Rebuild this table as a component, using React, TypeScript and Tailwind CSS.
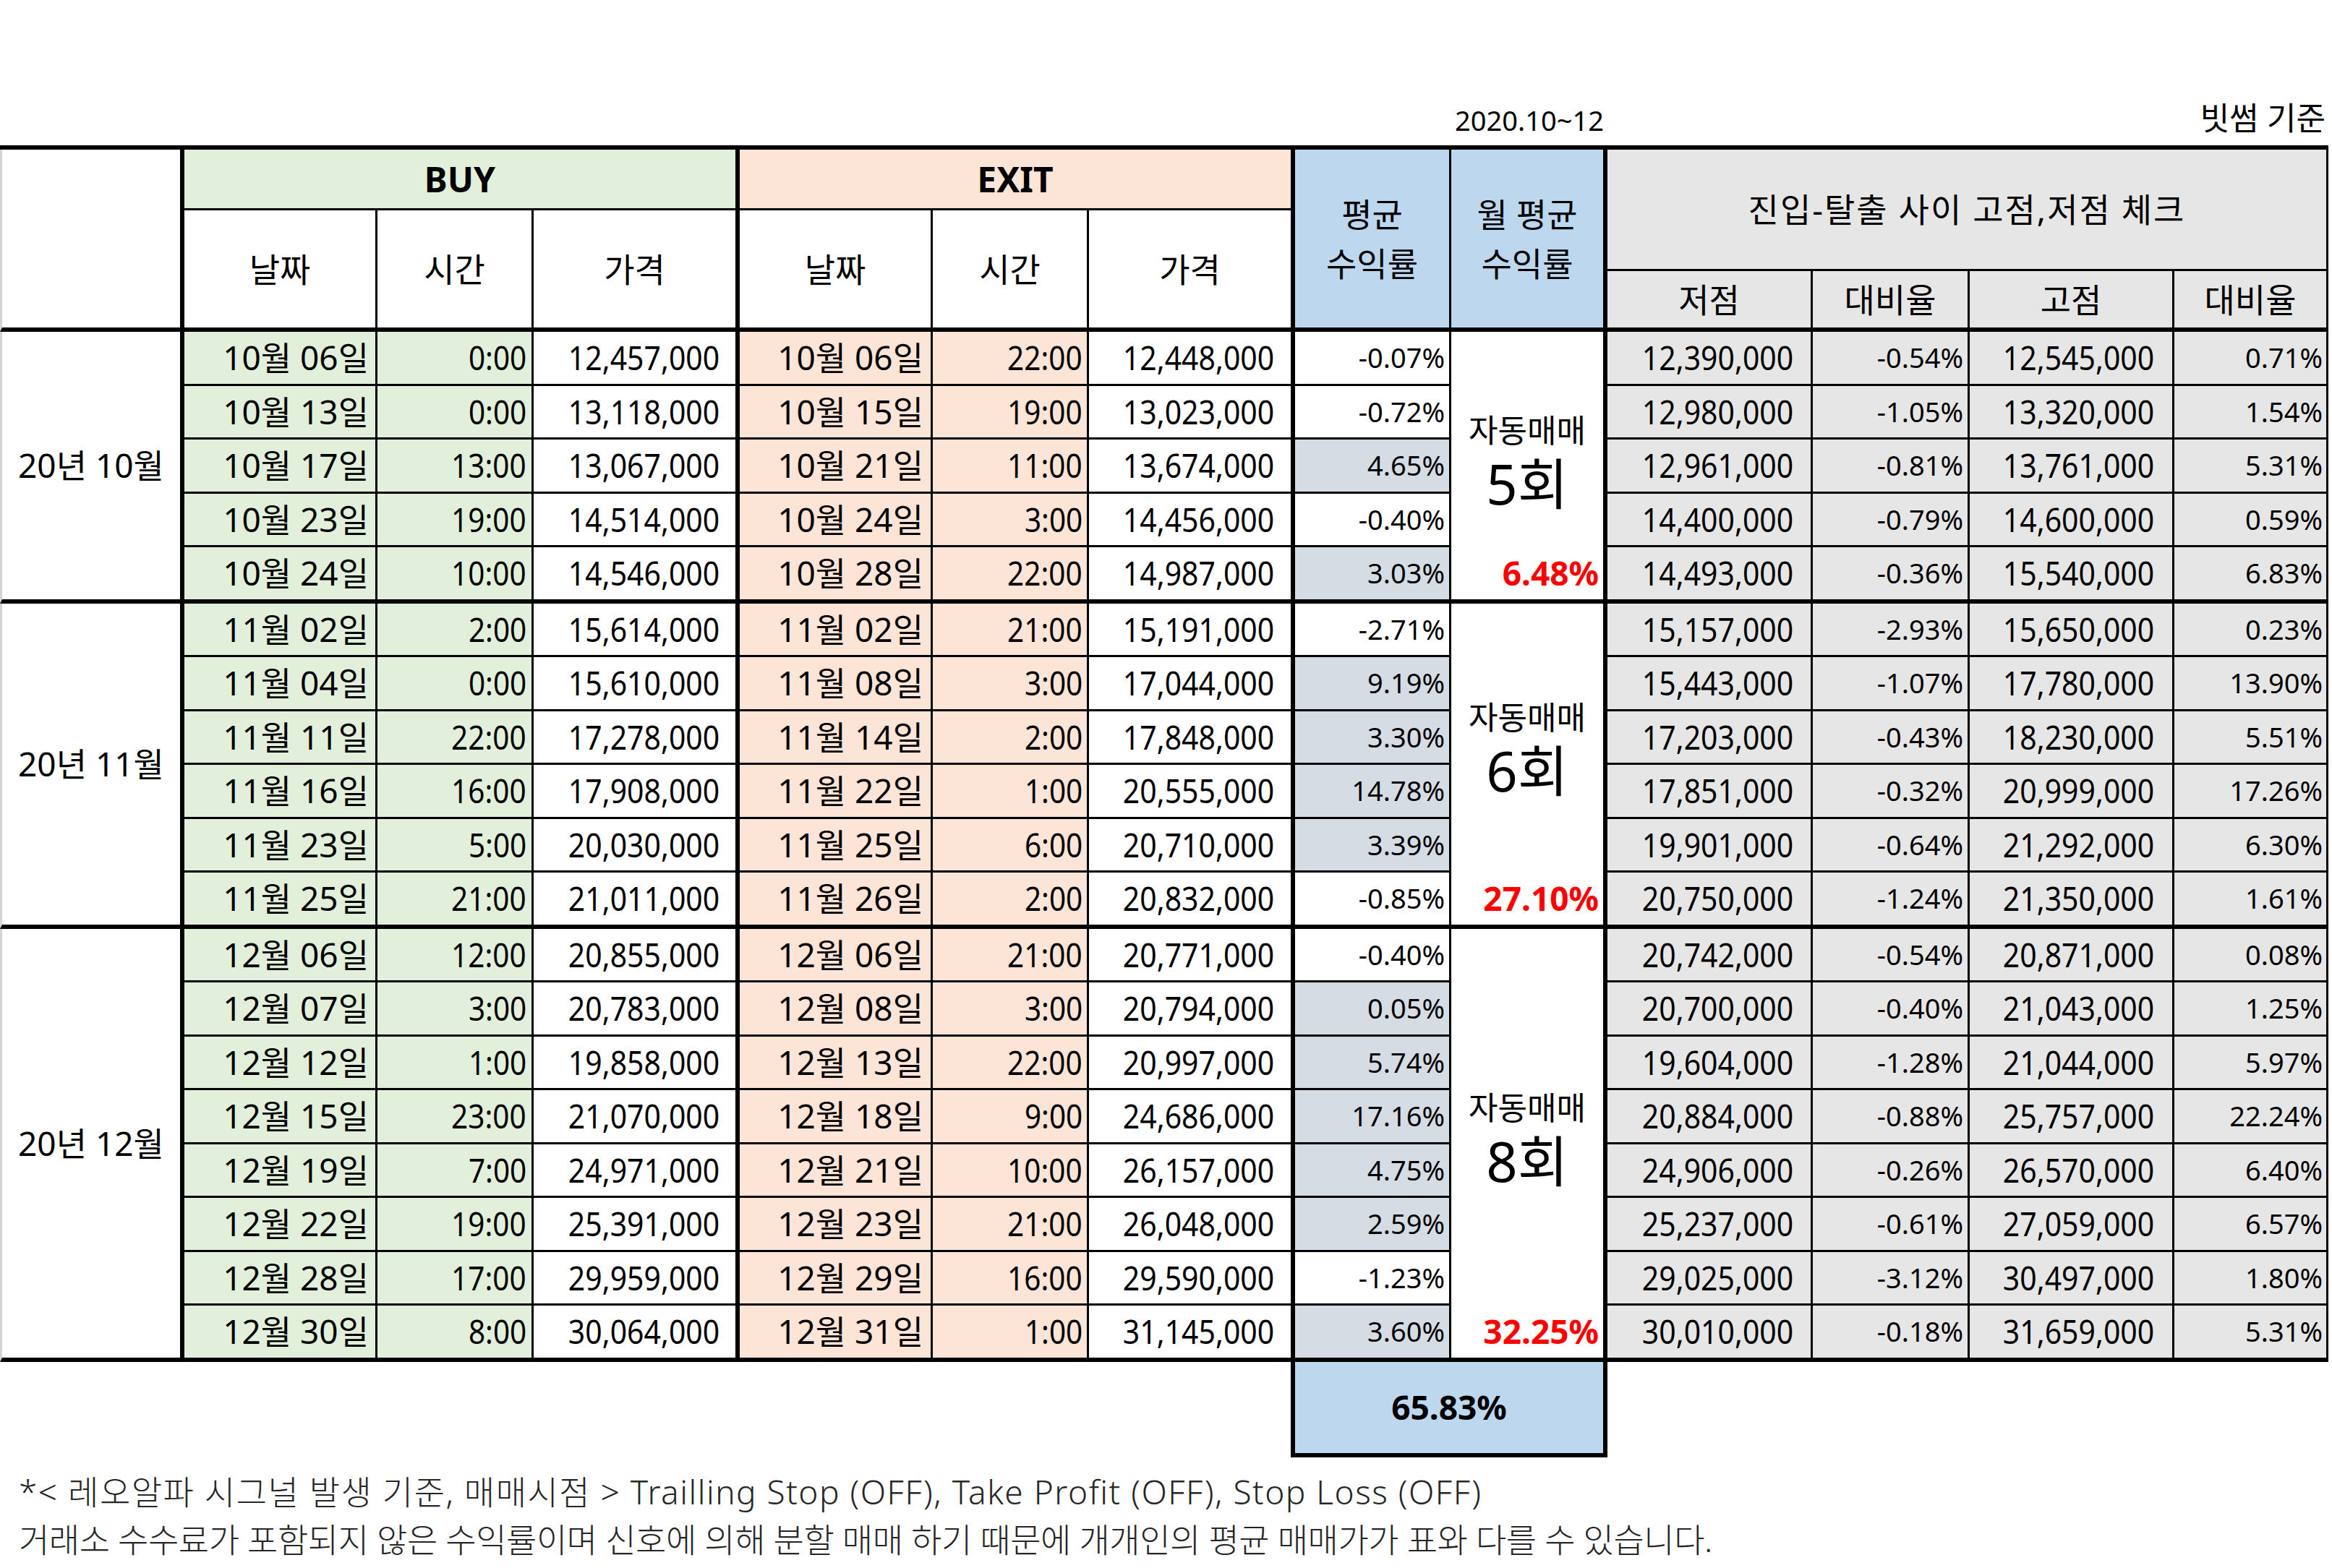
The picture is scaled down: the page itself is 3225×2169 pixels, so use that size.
import React from 'react';

type Row = [string, string, string, string, string, string, string, string, string, string, string];

const groups: { label: string; count: string; avg: string; span: string; pb: string; rows: Row[] }[] = [
  {
    label: '20년 10월',
    count: '5회',
    avg: '6.48%',
    span: 'row-span-5',
    pb: 'pb-[12px]',
    rows: [
      ['10월 06일', '0:00', '12,457,000', '10월 06일', '22:00', '12,448,000', '-0.07%', '12,390,000', '-0.54%', '12,545,000', '0.71%'],
      ['10월 13일', '0:00', '13,118,000', '10월 15일', '19:00', '13,023,000', '-0.72%', '12,980,000', '-1.05%', '13,320,000', '1.54%'],
      ['10월 17일', '13:00', '13,067,000', '10월 21일', '11:00', '13,674,000', '4.65%', '12,961,000', '-0.81%', '13,761,000', '5.31%'],
      ['10월 23일', '19:00', '14,514,000', '10월 24일', '3:00', '14,456,000', '-0.40%', '14,400,000', '-0.79%', '14,600,000', '0.59%'],
      ['10월 24일', '10:00', '14,546,000', '10월 28일', '22:00', '14,987,000', '3.03%', '14,493,000', '-0.36%', '15,540,000', '6.83%'],
    ],
  },
  {
    label: '20년 11월',
    count: '6회',
    avg: '27.10%',
    span: 'row-span-6',
    pb: 'pb-[44px]',
    rows: [
      ['11월 02일', '2:00', '15,614,000', '11월 02일', '21:00', '15,191,000', '-2.71%', '15,157,000', '-2.93%', '15,650,000', '0.23%'],
      ['11월 04일', '0:00', '15,610,000', '11월 08일', '3:00', '17,044,000', '9.19%', '15,443,000', '-1.07%', '17,780,000', '13.90%'],
      ['11월 11일', '22:00', '17,278,000', '11월 14일', '2:00', '17,848,000', '3.30%', '17,203,000', '-0.43%', '18,230,000', '5.51%'],
      ['11월 16일', '16:00', '17,908,000', '11월 22일', '1:00', '20,555,000', '14.78%', '17,851,000', '-0.32%', '20,999,000', '17.26%'],
      ['11월 23일', '5:00', '20,030,000', '11월 25일', '6:00', '20,710,000', '3.39%', '19,901,000', '-0.64%', '21,292,000', '6.30%'],
      ['11월 25일', '21:00', '21,011,000', '11월 26일', '2:00', '20,832,000', '-0.85%', '20,750,000', '-1.24%', '21,350,000', '1.61%'],
    ],
  },
  {
    label: '20년 12월',
    count: '8회',
    avg: '32.25%',
    span: 'row-span-8',
    pb: 'pb-[12px]',
    rows: [
      ['12월 06일', '12:00', '20,855,000', '12월 06일', '21:00', '20,771,000', '-0.40%', '20,742,000', '-0.54%', '20,871,000', '0.08%'],
      ['12월 07일', '3:00', '20,783,000', '12월 08일', '3:00', '20,794,000', '0.05%', '20,700,000', '-0.40%', '21,043,000', '1.25%'],
      ['12월 12일', '1:00', '19,858,000', '12월 13일', '22:00', '20,997,000', '5.74%', '19,604,000', '-1.28%', '21,044,000', '5.97%'],
      ['12월 15일', '23:00', '21,070,000', '12월 18일', '9:00', '24,686,000', '17.16%', '20,884,000', '-0.88%', '25,757,000', '22.24%'],
      ['12월 19일', '7:00', '24,971,000', '12월 21일', '10:00', '26,157,000', '4.75%', '24,906,000', '-0.26%', '26,570,000', '6.40%'],
      ['12월 22일', '19:00', '25,391,000', '12월 23일', '21:00', '26,048,000', '2.59%', '25,237,000', '-0.61%', '27,059,000', '6.57%'],
      ['12월 28일', '17:00', '29,959,000', '12월 29일', '16:00', '29,590,000', '-1.23%', '29,025,000', '-3.12%', '30,497,000', '1.80%'],
      ['12월 30일', '8:00', '30,064,000', '12월 31일', '1:00', '31,145,000', '3.60%', '30,010,000', '-0.18%', '31,659,000', '5.31%'],
    ],
  },
];

const COLS =
  'grid-cols-[255px_267px_216px_285px_267px_216px_285px_216px_216px_284px_217px_283px_213px]';

type ColDef = { idx: number; r: string; pr: string; bg: string; size: string; sc: string };

const dataCols: ColDef[] = [
  { idx: 0, r: 'border-r-[3px]', pr: 'pr-[9px]', bg: 'bg-[#E2EFDA]', size: 'text-[46px]', sc: '' },
  { idx: 1, r: 'border-r-[3px]', pr: 'pr-[7px]', bg: 'bg-[#E2EFDA]', size: 'text-[46px]', sc: 'scale-x-[0.88]' },
  { idx: 2, r: 'border-r-[6px]', pr: 'pr-[22px]', bg: 'bg-white', size: 'text-[46px]', sc: 'scale-x-[0.89]' },
  { idx: 3, r: 'border-r-[3px]', pr: 'pr-[10px]', bg: 'bg-[#FCE4D6]', size: 'text-[46px]', sc: '' },
  { idx: 4, r: 'border-r-[3px]', pr: 'pr-[6px]', bg: 'bg-[#FCE4D6]', size: 'text-[46px]', sc: 'scale-x-[0.88]' },
  { idx: 5, r: 'border-r-[6px]', pr: 'pr-[23px]', bg: 'bg-white', size: 'text-[46px]', sc: 'scale-x-[0.89]' },
  { idx: 6, r: 'border-r-[3px]', pr: 'pr-[6px]', bg: 'bg-white', size: 'text-[38px]', sc: '' },
];
const dataCols2: ColDef[] = [
  { idx: 7, r: 'border-r-[3px]', pr: 'pr-[24px]', bg: 'bg-[#E7E6E6]', size: 'text-[46px]', sc: 'scale-x-[0.89]' },
  { idx: 8, r: 'border-r-[3px]', pr: 'pr-[6px]', bg: 'bg-[#E7E6E6]', size: 'text-[38px]', sc: '' },
  { idx: 9, r: 'border-r-[3px]', pr: 'pr-[25px]', bg: 'bg-[#E7E6E6]', size: 'text-[46px]', sc: 'scale-x-[0.89]' },
  { idx: 10, r: 'border-r-[3px]', pr: 'pr-[5px]', bg: 'bg-[#E7E6E6]', size: 'text-[38px]', sc: '' },
];

function DataCell({ c, value, last }: { c: ColDef; value: string; last: boolean }) {
  let bg = c.bg;
  if (c.idx === 6 && !value.startsWith('-')) bg = 'bg-[#D6DCE4]';
  return (
    <div
      className={`flex items-center justify-end whitespace-nowrap border-black ${c.r} ${last ? 'border-b-[6px]' : 'border-b-[3px]'} ${c.pr} ${bg} ${c.size}`}
    >
      <span className={`inline-block origin-right ${c.sc}`}>{value}</span>
    </div>
  );
}

export default function App() {
  return (
    <div className="w-[3225px] h-[2169px] bg-white text-black font-['Noto_Sans','Noto_Sans_CJK_KR',sans-serif] overflow-hidden">
      {/* caption row */}
      <div className={`grid ${COLS} h-[201px] w-[3220px]`}>
        <div className="col-start-9 flex items-end justify-center pb-[16px] text-[38px] leading-none whitespace-nowrap">
          2020.10~12
        </div>
        <div className="col-start-10 col-span-4 flex items-end justify-end pb-[16px] pr-[4px] text-[44px] leading-none whitespace-nowrap">
          빗썸 기준
        </div>
      </div>

      {/* table */}
      <div
        className={`grid ${COLS} grid-rows-[84px_84px_84px_repeat(4,74.5px)_77.5px_repeat(5,74.5px)_77.5px_repeat(7,74.5px)_77.5px] w-[3220px] border-t-[6px] border-black`}
      >
        {/* header */}
        <div className="row-span-3 bg-white border-black border-l-[3px] border-l-[#d4d4d4] border-r-[6px] border-b-[6px]" />
        <div className="col-span-3 flex items-center justify-center bg-[#E2EFDA] border-black border-r-[6px] border-b-[3px] text-[48px] font-bold">
          BUY
        </div>
        <div className="col-span-3 flex items-center justify-center bg-[#FCE4D6] border-black border-r-[6px] border-b-[3px] text-[48px] font-bold">
          EXIT
        </div>
        <div className="row-span-3 flex flex-col items-center justify-center bg-[#BDD7EE] border-black border-r-[3px] border-b-[6px] text-[46px] leading-[68px]">
          <span>평균</span>
          <span>수익률</span>
        </div>
        <div className="row-span-3 flex flex-col items-center justify-center bg-[#BDD7EE] border-black border-r-[6px] border-b-[6px] text-[46px] leading-[68px] whitespace-nowrap">
          <span>월 평균</span>
          <span>수익률</span>
        </div>
        <div className="col-span-4 row-span-2 flex items-center justify-center bg-[#E7E6E6] border-black border-r-[3px] border-b-[3px] text-[46px] tracking-[2px] whitespace-nowrap">
          진입-탈출 사이 고점,저점 체크
        </div>
        {['날짜', '시간', '가격', '날짜', '시간', '가격'].map((h, i) => (
          <div
            key={i}
            className={`row-span-2 flex items-center justify-center bg-white border-black border-b-[6px] text-[46px] ${i === 2 || i === 5 ? 'border-r-[6px]' : 'border-r-[3px]'}`}
          >
            {h}
          </div>
        ))}
        {['저점', '대비율', '고점', '대비율'].map((h, i) => (
          <div
            key={'g' + i}
            className="flex items-center justify-center bg-[#E7E6E6] border-black border-r-[3px] border-b-[6px] text-[46px]"
          >
            {h}
          </div>
        ))}

        {/* data */}
        {groups.map((g) =>
          g.rows.map((row, ri) => {
            const last = ri === g.rows.length - 1;
            return (
              <React.Fragment key={g.label + ri}>
                {ri === 0 && (
                  <div
                    className={`${g.span} flex items-center justify-center whitespace-nowrap bg-white border-black border-l-[3px] border-l-[#d4d4d4] border-r-[6px] border-b-[6px] text-[46px]`}
                  >
                    {g.label}
                  </div>
                )}
                {dataCols.map((c) => (
                  <DataCell key={c.idx} c={c} value={row[c.idx]} last={last} />
                ))}
                {ri === 0 && (
                  <div className={`${g.span} grid bg-white border-black border-r-[6px] border-b-[6px]`}>
                    <div className={`col-start-1 row-start-1 flex flex-col items-center justify-center ${g.pb}`}>
                      <span className="text-[44px] leading-[62px] whitespace-nowrap">자동매매</span>
                      <span className="text-[76px] leading-[86px] whitespace-nowrap">{g.count}</span>
                    </div>
                    <div className="col-start-1 row-start-1 self-end h-[71.5px] flex items-center justify-end pr-[6px] text-[46px] font-bold text-[#FF0000]">
                      {g.avg}
                    </div>
                  </div>
                )}
                {dataCols2.map((c) => (
                  <DataCell key={c.idx} c={c} value={row[c.idx]} last={last} />
                ))}
              </React.Fragment>
            );
          })
        )}
      </div>

      {/* total box */}
      <div className="flex">
        <div className="w-[1785px] shrink-0" />
        <div className="w-[438px] h-[132.5px] shrink-0 flex items-center justify-center bg-[#BDD7EE] border-black border-x-[6px] border-b-[6px] text-[46px] font-bold">
          65.83%
        </div>
      </div>

      {/* footnote */}
      <div className="pl-[26px] pt-[14px] text-[46px] font-light text-[#262626] leading-[66px] whitespace-nowrap">
        <div className="tracking-[1.5px]">
          *&lt; 레오알파 시그널 발생 기준, 매매시점 &gt; Trailling Stop (OFF), Take Profit (OFF), Stop Loss (OFF)
        </div>
        <div className="tracking-[-0.45px]">
          거래소 수수료가 포함되지 않은 수익률이며 신호에 의해 분할 매매 하기 때문에 개개인의 평균 매매가가 표와 다를 수 있습니다.
        </div>
      </div>
    </div>
  );
}
